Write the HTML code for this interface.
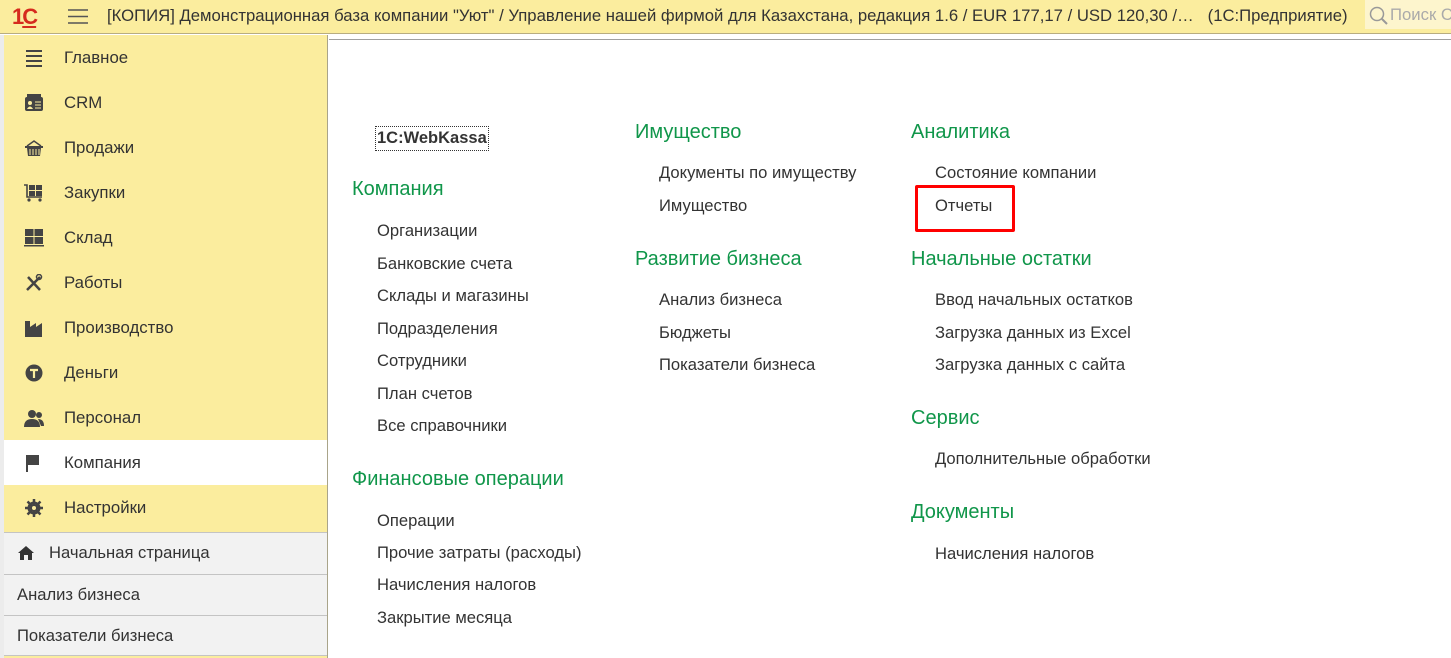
<!DOCTYPE html>
<html><head><meta charset="utf-8"><style>
*{margin:0;padding:0;box-sizing:border-box}
body{width:1451px;height:658px;overflow:hidden;background:#fff;font-family:"Liberation Sans",Arial,sans-serif;color:#333;position:relative}
.a{position:absolute;white-space:nowrap}
#top{position:absolute;left:0;top:0;width:1451px;height:34px;background:#fbed9e;border-bottom:1px solid #b8ad80}
#side{position:absolute;left:4px;top:35px;width:324px;height:623px;background:#fbed9e;border-right:1px solid #a9a48a}
.it{position:absolute;left:0;width:323px;height:45px;font-size:16.8px;line-height:45px;padding-left:60px}
.ic{position:absolute;left:20px;top:14px;width:20px;height:18px}
.g{position:absolute;left:0;width:323px;background:#f2f2f2;border-top:1px solid #c4c4c4;font-size:16.6px;padding-left:13px}
.h{font-size:20px;color:#10964a;position:absolute;white-space:nowrap}
.l{font-size:16.6px;color:#333;position:absolute;white-space:nowrap}
</style></head><body>
<div id="top">
 <div class="a" style="left:12px;top:4px;font:bold 22px 'Liberation Sans';color:#d52b1e;letter-spacing:-2px">1<span style="text-decoration:underline">С</span></div>
 <svg class="a" style="left:68px;top:8px" width="20" height="17"><path d="M0 2H20M0 8.5H20M0 15H20" stroke="#555" stroke-width="1.6"/></svg>
 <div class="a" style="left:107px;top:6px;font-size:16.7px;color:#333">[КОПИЯ] Демонстрационная база компании "Уют" / Управление нашей фирмой для Казахстана, редакция 1.6 / EUR 177,17 / USD 120,30 /…&nbsp;&nbsp;&nbsp;(1С:Предприятие)</div>
 <div class="a" style="left:1365px;top:0;width:86px;height:29px;background:#fdf5cd"></div>
 <svg class="a" style="left:1369px;top:6px" width="20" height="20"><circle cx="8" cy="8" r="6.5" fill="none" stroke="#999" stroke-width="1.5"/><path d="M13 13L18 18" stroke="#999" stroke-width="2"/></svg>
 <div class="a" style="left:1390px;top:5px;font-size:16.7px;color:#aaa">Поиск С</div>
</div>
<div class="a" style="left:0;top:35px;width:4px;height:623px;background:#ececec"></div>
<div class="a" style="left:329px;top:39px;width:1122px;height:1px;background:#a0a0a0"></div>
<div id="side">
 <div class="it" style="top:0"><svg class="ic" viewBox="0 0 20 18"><path d="M2 2H18M2 7H18M2 12H18M2 17H18" stroke="#444" stroke-width="2"/></svg>Главное</div>
 <div class="it" style="top:45px"><svg class="ic" viewBox="0 0 20 18"><rect x="1" y="3" width="18" height="14" rx="2" fill="#444"/><rect x="3" y="0" width="14" height="3" fill="#444"/><circle cx="6" cy="9" r="2" fill="#fbed9e"/><path d="M3 15Q6 10 9 15Z" fill="#fbed9e"/><path d="M11 8H17M11 11H17M11 14H17" stroke="#fbed9e"/></svg>CRM</div>
 <div class="it" style="top:90px"><svg class="ic" viewBox="0 0 20 18"><path d="M3 7L10 2L17 7" stroke="#444" fill="none" stroke-width="1.5"/><rect x="1" y="7" width="18" height="2" fill="#444"/><path d="M3 9H17L16 17H4Z" fill="#444"/><path d="M6 10V16M9 10V16M12 10V16M15 10V16" stroke="#fbed9e"/></svg>Продажи</div>
 <div class="it" style="top:135px"><svg class="ic" viewBox="0 0 20 18"><path d="M0 1H3V13H18" stroke="#444" fill="none" stroke-width="1.6"/><rect x="5" y="1" width="6" height="5" fill="#444"/><rect x="12" y="1" width="6" height="5" fill="#444"/><rect x="5" y="7" width="6" height="5" fill="#444"/><rect x="12" y="7" width="6" height="5" fill="#444"/><circle cx="5" cy="16" r="1.6" fill="#444"/><circle cx="16" cy="16" r="1.6" fill="#444"/></svg>Закупки</div>
 <div class="it" style="top:180px"><svg class="ic" viewBox="0 0 20 18"><rect x="1" y="0" width="8.5" height="7" fill="#444"/><rect x="10.5" y="0" width="8.5" height="7" fill="#444"/><rect x="1" y="8" width="8.5" height="7" fill="#444"/><rect x="10.5" y="8" width="8.5" height="7" fill="#444"/><rect x="0" y="16" width="20" height="1.5" fill="#444"/></svg>Склад</div>
 <div class="it" style="top:225px"><svg class="ic" viewBox="0 0 20 18"><path d="M3 16L16 3M4 3L16 16" stroke="#444" stroke-width="2.5"/><circle cx="15" cy="3" r="2.5" fill="none" stroke="#444" stroke-width="1.5"/></svg>Работы</div>
 <div class="it" style="top:270px"><svg class="ic" viewBox="0 0 20 18"><path d="M1 18V2H6V8L12 4V8L18 4V18Z" fill="#444"/></svg>Производство</div>
 <div class="it" style="top:315px"><svg class="ic" viewBox="0 0 20 18"><circle cx="10" cy="9" r="8.5" fill="#444"/><path d="M6 6H14M10 6V14" stroke="#fbed9e" stroke-width="2.2"/></svg>Деньги</div>
 <div class="it" style="top:360px"><svg class="ic" viewBox="0 0 20 18"><circle cx="8" cy="5" r="4" fill="#444"/><path d="M0 18Q0 10 8 10Q16 10 16 18Z" fill="#444"/><circle cx="15" cy="6" r="3" fill="#444"/><path d="M14 10Q20 10 20 17H17Z" fill="#444"/></svg>Персонал</div>
 <div class="it" style="top:405px;background:#fff"><svg class="ic" viewBox="0 0 20 18"><path d="M3 1V18" stroke="#444" stroke-width="2"/><path d="M4 1H15V11H4Z" fill="#444"/></svg>Компания</div>
 <div class="it" style="top:450px"><svg class="ic" viewBox="0 0 20 18"><circle cx="10" cy="9" r="5" fill="none" stroke="#444" stroke-width="3"/><path d="M10 0V18M1 9H19M3.5 2.5L16.5 15.5M16.5 2.5L3.5 15.5" stroke="#444" stroke-width="2.5"/><circle cx="10" cy="9" r="2" fill="#fbed9e"/></svg>Настройки</div>
 <div class="g" style="top:497px;height:42px;line-height:40px;padding-left:45px"><svg class="a" style="left:13px;top:12px" width="18" height="16" viewBox="0 0 18 16"><path d="M9 1L1 8H3V15H7V10H11V15H15V8H17Z" fill="#333"/></svg>Начальная страница</div>
 <div class="g" style="top:539px;height:41px;line-height:40px">Анализ бизнеса</div>
 <div class="g" style="top:580px;height:41px;line-height:40px;border-bottom:1px solid #c4c4c4">Показатели бизнеса</div>
</div>

<div class="a" style="left:375px;top:126px;width:114px;height:25px;border:1px dotted #333;font:bold 16.5px 'Liberation Sans';line-height:22px;padding-left:1px">1C:WebKassa</div>
<div class="h" style="left:352px;top:178px">Компания</div>
<div class="l" style="left:377px;top:221px">Организации</div>
<div class="l" style="left:377px;top:254px">Банковские счета</div>
<div class="l" style="left:377px;top:286px">Склады и магазины</div>
<div class="l" style="left:377px;top:319px">Подразделения</div>
<div class="l" style="left:377px;top:351px">Сотрудники</div>
<div class="l" style="left:377px;top:384px">План счетов</div>
<div class="l" style="left:377px;top:416px">Все справочники</div>
<div class="h" style="left:352px;top:468px">Финансовые операции</div>
<div class="l" style="left:377px;top:511px">Операции</div>
<div class="l" style="left:377px;top:543px">Прочие затраты (расходы)</div>
<div class="l" style="left:377px;top:575px">Начисления налогов</div>
<div class="l" style="left:377px;top:608px">Закрытие месяца</div>

<div class="h" style="left:635px;top:121px">Имущество</div>
<div class="l" style="left:659px;top:163px">Документы по имуществу</div>
<div class="l" style="left:659px;top:196px">Имущество</div>
<div class="h" style="left:635px;top:248px">Развитие бизнеса</div>
<div class="l" style="left:659px;top:290px">Анализ бизнеса</div>
<div class="l" style="left:659px;top:323px">Бюджеты</div>
<div class="l" style="left:659px;top:355px">Показатели бизнеса</div>

<div class="h" style="left:911px;top:121px">Аналитика</div>
<div class="l" style="left:935px;top:163px">Состояние компании</div>
<div class="l" style="left:935px;top:196px">Отчеты</div>
<div class="a" style="left:915px;top:185px;width:100px;height:47px;border:3px solid #f00;border-radius:2px"></div>
<div class="h" style="left:911px;top:248px">Начальные остатки</div>
<div class="l" style="left:935px;top:290px">Ввод начальных остатков</div>
<div class="l" style="left:935px;top:323px">Загрузка данных из Excel</div>
<div class="l" style="left:935px;top:355px">Загрузка данных с сайта</div>
<div class="h" style="left:911px;top:407px">Сервис</div>
<div class="l" style="left:935px;top:449px">Дополнительные обработки</div>
<div class="h" style="left:911px;top:501px">Документы</div>
<div class="l" style="left:935px;top:544px">Начисления налогов</div>
</body></html>
